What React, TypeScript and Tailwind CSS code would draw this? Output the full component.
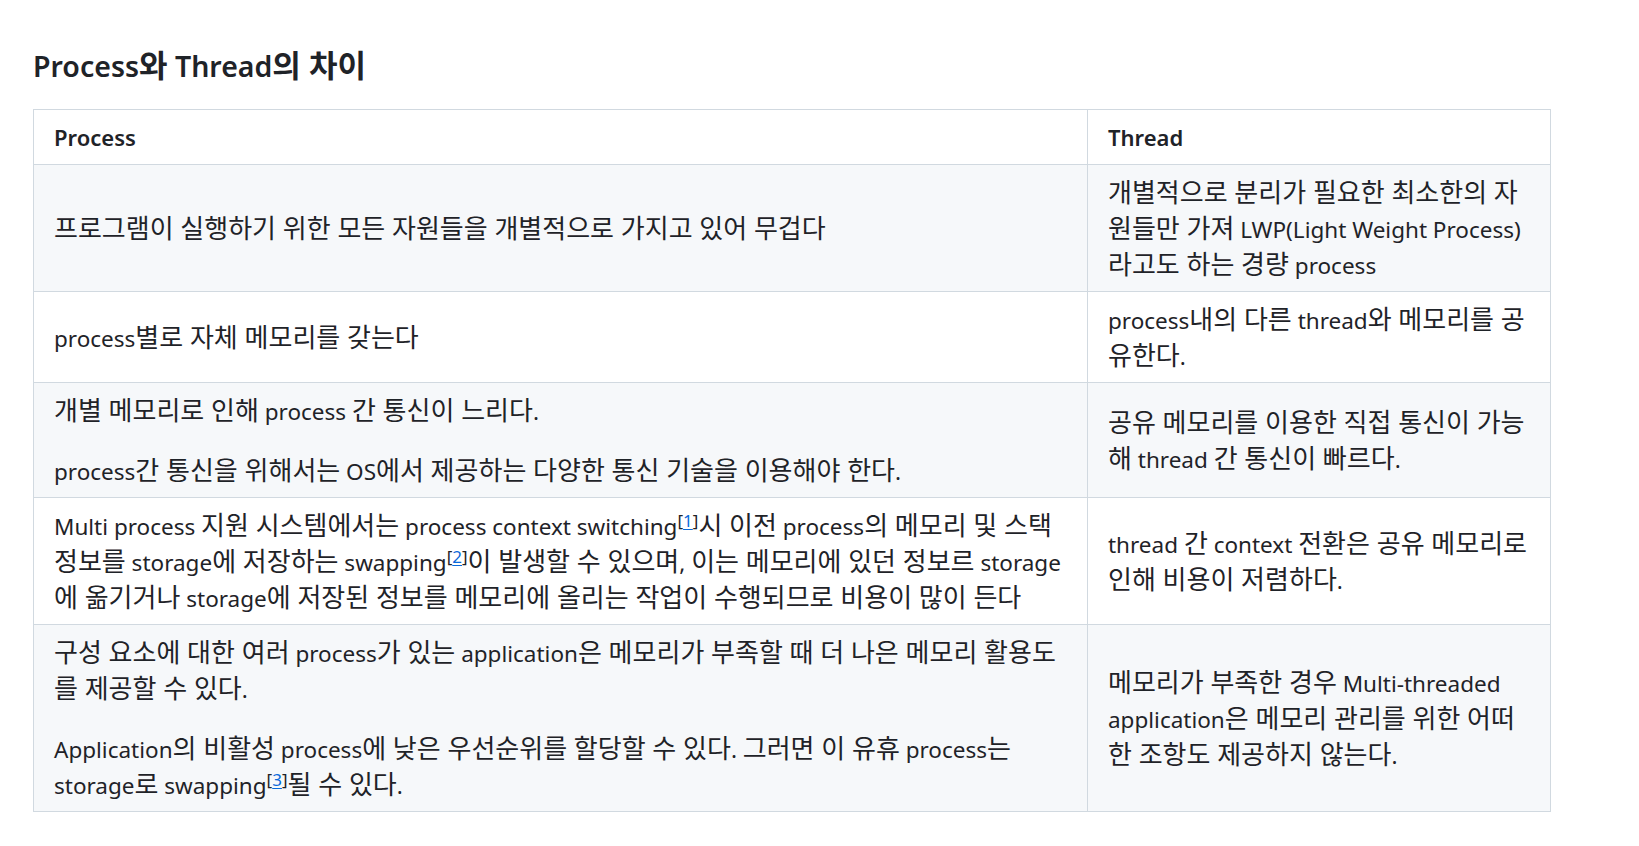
import type { ReactNode } from 'react';

const font = { fontFamily: '"Noto Sans", "Noto Sans CJK KR", sans-serif' };

// Hangul runs (with the spaces between them) get a larger size so the
// CJK fallback lines up with the wider Korean face of the original page.
const HANGUL = /([\uAC00-\uD7A3][\uAC00-\uD7A3 ]*[\uAC00-\uD7A3]|[\uAC00-\uD7A3])/;

function Ref({ n }: { n: number }) {
  return (
    <sup className="text-[17px] leading-none">
      [<a href={`#fn${n}`} className="text-[#0969da] underline underline-offset-2">{n}</a>]
    </sup>
  );
}

function Line({ text, ko = 'text-[26px]' }: { text: string; ko?: string }) {
  const parts = text.split(/(\[\d\])/);
  return (
    <>
      {parts.map((part, i) => {
        const m = part.match(/^\[(\d)\]$/);
        if (m) return <Ref key={i} n={Number(m[1])} />;
        return part.split(HANGUL).map((seg, j) =>
          /^[\uAC00-\uD7A3 ]+$/.test(seg) && /[\uAC00-\uD7A3]/.test(seg) ? (
            <span key={`${i}-${j}`} className={`${ko} leading-none`}>
              {seg}
            </span>
          ) : (
            <span key={`${i}-${j}`}>{seg}</span>
          )
        );
      })}
    </>
  );
}

function Lines({ lines }: { lines: string[] }) {
  return (
    <>
      {lines.map((l, i) => (
        <span key={i}>
          {i > 0 && <br />}
          <Line text={l} />
        </span>
      ))}
    </>
  );
}

function Cell({ paras }: { paras: string[][] }) {
  return (
    <td className="border border-[#d1d9e0] px-[20px] pt-[11px] pb-[7px] align-middle whitespace-nowrap">
      {paras.length === 1 ? (
        <Lines lines={paras[0]} />
      ) : (
        paras.map((p, i) => (
          <p key={i} className={i < paras.length - 1 ? 'mb-[24px]' : ''}>
            <Lines lines={p} />
          </p>
        ))
      )}
    </td>
  );
}

const rows: { process: string[][]; thread: string[][] }[] = [
  {
    process: [['프로그램이 실행하기 위한 모든 자원들을 개별적으로 가지고 있어 무겁다']],
    thread: [['개별적으로 분리가 필요한 최소한의 자', '원들만 가져 LWP(Light Weight Process)', '라고도 하는 경량 process']]
  },
  {
    process: [['process별로 자체 메모리를 갖는다']],
    thread: [['process내의 다른 thread와 메모리를 공', '유한다.']]
  },
  {
    process: [
      ['개별 메모리로 인해 process 간 통신이 느리다.'],
      ['process간 통신을 위해서는 OS에서 제공하는 다양한 통신 기술을 이용해야 한다.']
    ],
    thread: [['공유 메모리를 이용한 직접 통신이 가능', '해 thread 간 통신이 빠르다.']]
  },
  {
    process: [
      [
        'Multi process 지원 시스템에서는 process context switching[1]시 이전 process의 메모리 및 스택',
        '정보를 storage에 저장하는 swapping[2]이 발생할 수 있으며, 이는 메모리에 있던 정보르 storage',
        '에 옮기거나 storage에 저장된 정보를 메모리에 올리는 작업이 수행되므로 비용이 많이 든다'
      ]
    ],
    thread: [['thread 간 context 전환은 공유 메모리로', '인해 비용이 저렴하다.']]
  },
  {
    process: [
      ['구성 요소에 대한 여러 process가 있는 application은 메모리가 부족할 때 더 나은 메모리 활용도', '를 제공할 수 있다.'],
      ['Application의 비활성 process에 낮은 우선순위를 할당할 수 있다. 그러면 이 유휴 process는', 'storage로 swapping[3]될 수 있다.']
    ],
    thread: [['메모리가 부족한 경우 Multi-threaded', 'application은 메모리 관리를 위한 어떠', '한 조항도 제공하지 않는다.']]
  }
];

export default function App() {
  return (
    <div className="min-h-screen bg-white text-[#1f2328] px-[33px] pt-[47px]" style={font}>
      <h3 className="text-[28.5px] font-semibold leading-[38px] mb-[24px]">
        <Line text="Process와 Thread의 차이" ko="text-[31px]" />
      </h3>
      <table className="table-fixed border-collapse w-[1517px] text-[22.5px] leading-[36px]">
        <colgroup>
          <col className="w-[1054px]" />
          <col className="w-[463px]" />
        </colgroup>
        <thead>
          <tr className="bg-white">
            <th className="border border-[#d1d9e0] px-[20px] py-[9px] text-left font-semibold text-[22px]">Process</th>
            <th className="border border-[#d1d9e0] px-[20px] py-[9px] text-left font-semibold text-[22px]">Thread</th>
          </tr>
        </thead>
        <tbody>
          {rows.map((r, i) => (
            <tr key={i} className={i % 2 === 0 ? 'bg-[#f6f8fa]' : 'bg-white'}>
              <Cell paras={r.process} />
              <Cell paras={r.thread} />
            </tr>
          ))}
        </tbody>
      </table>
    </div>
  );
}
